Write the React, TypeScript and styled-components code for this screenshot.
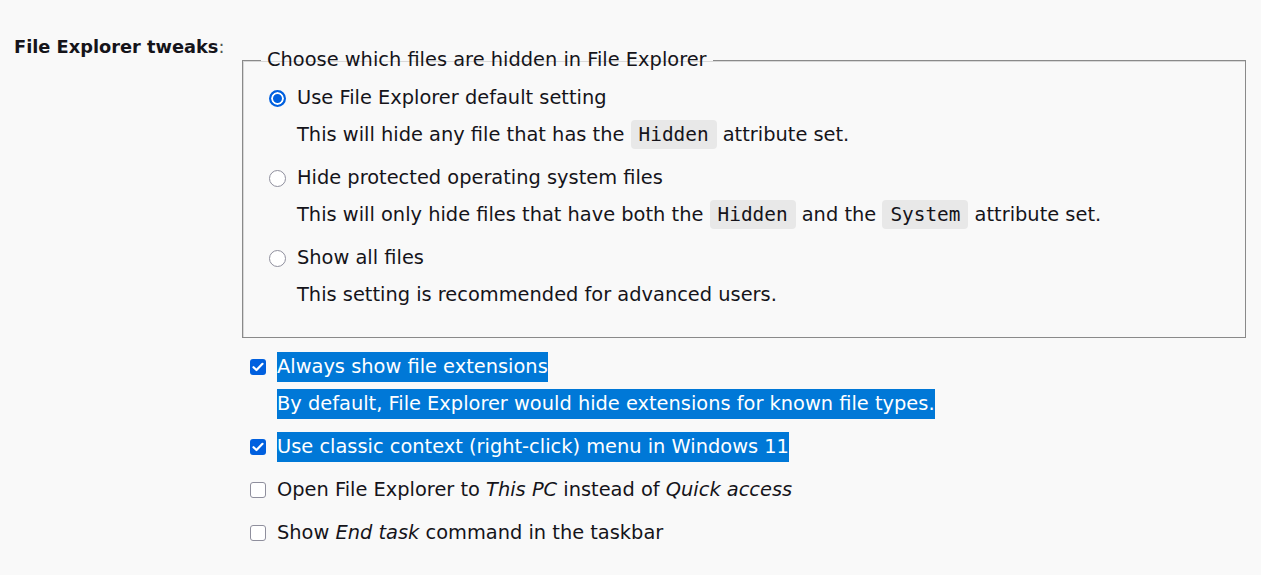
import React from "react";
import styled, { createGlobalStyle } from "styled-components";

const Global = createGlobalStyle`
  html, body { margin: 0; padding: 0; background: #f9f9f9; }
  body { font-family: "DejaVu Sans", "Noto Sans", sans-serif; color: #15141a; }
`;

const Page = styled.div`
  display: grid;
  grid-template-columns: 228px 1fr;
  padding: 32px 15px 20px 14px;
  font-size: 19.4px;
  line-height: 30px;
`;

const SectionLabel = styled.div`
  font-weight: bold;
  font-size: 17.8px;
  line-height: 30px;
`;

const Colon = styled.span`
  font-weight: normal;
  color: #555;
`;

const Content = styled.div`
  display: flex;
  flex-direction: column;
  padding-top: 13px;
`;

const Fieldset = styled.fieldset`
  margin: 0;
  border: 1px solid #8a8a8a;
  box-shadow: inset 1px 1px 0 #d8d8d8;
  padding: 8px 18px 27px 18px;
  display: flex;
  flex-direction: column;
  gap: 13px;
`;

const Legend = styled.legend`
  padding: 0 6px;
  line-height: 30px;
`;

const Option = styled.div`
  display: grid;
  grid-template-columns: 28px 1fr;
  row-gap: 7px;
  align-items: center;
  padding-left: 8px;
`;

const Radio = styled.span<{ $checked?: boolean }>`
  width: 17px;
  height: 17px;
  box-sizing: border-box;
  border-radius: 50%;
  border: ${(p) => (p.$checked ? "2px solid #0060df" : "1px solid #8f8f9d")};
  background: ${(p) => (p.$checked ? "#0060df" : "#fff")};
  box-shadow: ${(p) => (p.$checked ? "inset 0 0 0 2px #fff" : "none")};
`;

const Text = styled.span`
  line-height: 30px;
`;

const Desc = styled.div`
  grid-column: 2;
  line-height: 30px;
`;

const Code = styled.code`
  font-family: "DejaVu Sans Mono", monospace;
  font-size: 19.4px;
  background: #e8e8e8;
  border-radius: 4px;
  padding: 3px 8px;
`;

const CheckList = styled.div`
  display: flex;
  flex-direction: column;
  gap: 13px;
  margin-top: 14px;
  padding-left: 8px;
`;

const CheckItem = styled.div`
  display: grid;
  grid-template-columns: 27px 1fr;
  row-gap: 7px;
  align-items: center;
  justify-items: start;
`;

const Box = styled.span<{ $checked?: boolean }>`
  width: 16px;
  height: 16px;
  box-sizing: border-box;
  border-radius: 3px;
  border: ${(p) => (p.$checked ? "none" : "1px solid #8f8f9d")};
  background: ${(p) => (p.$checked ? "#0060df" : "#fff")};
  display: flex;
  align-items: center;
  justify-content: center;
`;

const Selected = styled.span<{ $sel?: boolean }>`
  display: inline-block;
  line-height: 30px;
  background: ${(p) => (p.$sel ? "#0078d7" : "transparent")};
  color: ${(p) => (p.$sel ? "#fff" : "inherit")};
`;

const Check = () => (
  <svg width="12" height="10" viewBox="0 0 12 10">
    <path d="M1.5 5.2 L4.5 8 L10.5 1.8" fill="none" stroke="#fff" strokeWidth="2.2" strokeLinecap="round" strokeLinejoin="round" />
  </svg>
);

export default function App() {
  return (
    <>
      <Global />
      <Page>
        <SectionLabel>
          File Explorer tweaks<Colon>:</Colon>
        </SectionLabel>
        <Content>
          <Fieldset>
            <Legend>Choose which files are hidden in File Explorer</Legend>
            <Option>
              <Radio $checked />
              <Text>Use File Explorer default setting</Text>
              <Desc>
                This will hide any file that has the <Code>Hidden</Code> attribute set.
              </Desc>
            </Option>
            <Option>
              <Radio />
              <Text>Hide protected operating system files</Text>
              <Desc>
                This will only hide files that have both the <Code>Hidden</Code> and the{" "}
                <Code>System</Code> attribute set.
              </Desc>
            </Option>
            <Option>
              <Radio />
              <Text>Show all files</Text>
              <Desc>This setting is recommended for advanced users.</Desc>
            </Option>
          </Fieldset>
          <CheckList>
            <CheckItem>
              <Box $checked>
                <Check />
              </Box>
              <Selected $sel>Always show file extensions</Selected>
              <Desc>
                <Selected $sel>By default, File Explorer would hide extensions for known file types.</Selected>
              </Desc>
            </CheckItem>
            <CheckItem>
              <Box $checked>
                <Check />
              </Box>
              <Selected $sel>Use classic context (right-click) menu in Windows 11</Selected>
            </CheckItem>
            <CheckItem>
              <Box />
              <Selected>
                Open File Explorer to <em>This PC</em> instead of <em>Quick access</em>
              </Selected>
            </CheckItem>
            <CheckItem>
              <Box />
              <Selected>
                Show <em>End task</em> command in the taskbar
              </Selected>
            </CheckItem>
          </CheckList>
        </Content>
      </Page>
    </>
  );
}
